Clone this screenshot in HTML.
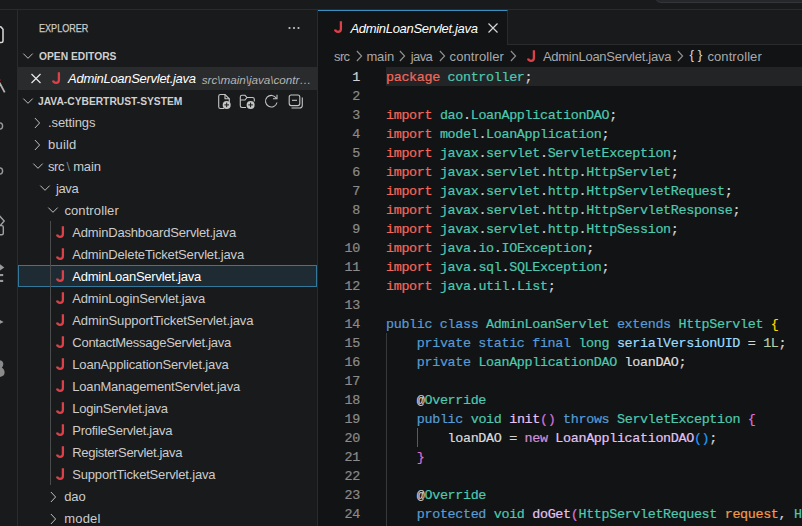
<!DOCTYPE html>
<html><head><meta charset="utf-8"><title>AdminLoanServlet.java</title>
<style>
html,body{margin:0;padding:0;width:802px;height:526px;overflow:hidden;background:#191a1b;}
body{position:relative;font-family:"Liberation Sans", sans-serif;}
.abs{position:absolute}
.t{position:absolute;white-space:pre;}
.ic{position:absolute;overflow:visible}
.j{position:absolute;font-family:"Liberation Sans", sans-serif;font-weight:bold;line-height:22px;color:#dc4048;}
#ed{position:absolute;left:318px;top:10px;width:484px;height:516px;background:#121314;}
#tabbar{position:absolute;left:318px;top:10px;width:484px;height:34px;background:#191a1b;border-bottom:1px solid #2a2b2d;}
#tab{position:absolute;left:318px;top:10px;width:190px;height:35px;background:#121314;border-right:1px solid #2a2b2d;border-top:1px solid #3a8fbf;box-sizing:border-box}
.ln{position:absolute;left:318px;width:42px;text-align:right;font:13.4px/19px "Liberation Mono", monospace;letter-spacing:-0.34px;color:#8b8b8b;height:19px;padding-top:1px;box-sizing:border-box}
.ln.act{color:#d0d0d0}
.cl{position:absolute;left:386px;white-space:pre;font:13.4px/19px "Liberation Mono", monospace;letter-spacing:-0.34px;color:#d4d4d4;height:19px;padding-top:1px;box-sizing:border-box}
.cl i{font-style:normal}
.cl,.ln{-webkit-text-stroke:0.2px currentColor}
.k{color:#569cd6}.y{color:#4ec9b0}.c{color:#f4685c}.v{color:#9cdcfe}.f{color:#e3c3f5}
.n{color:#b5cea8}.p{color:#d4d4d4}.b1{color:#ffd700}.b2{color:#da70d6}.b3{color:#179fff}
.pa{color:#f29a46}.nw{color:#d68fd6}.w{color:#dcdcdc}
</style></head><body>
<!-- title bar -->
<div class="abs" style="left:0;top:0;width:802px;height:9px;background:#191a1b;border-bottom:1px solid #2a2b2d"></div>
<div class="abs" style="left:655px;top:-10px;width:200px;height:13px;background:#26272a;border:1px solid #343538;border-radius:6px;box-sizing:border-box"></div>
<!-- activity bar -->
<div class="abs" style="left:0;top:10px;width:17px;height:516px;background:#191a1b;border-right:1px solid #2a2b2d"></div>
<svg class="abs" style="left:0;top:10px" width="17" height="516" viewBox="0 10 17 516" fill="none">
 <path d="M-1 26.4 L1 26.9 L3 29.2 V41 Q3 42.5 1.2 42.5 H-1 Z" stroke="#dadada" stroke-width="1.5" fill="#0c0c0d"/>
 <path d="M-0.5 82.8 L4.7 92.4" stroke="#b4b4b4" stroke-width="1.8"/>
 <rect x="0" y="79" width="1" height="2" fill="#6a1518"/>
 <circle cx="-0.6" cy="126" r="3.2" stroke="#9a9a9a" stroke-width="1.4"/>
 <circle cx="-0.6" cy="171" r="3.2" stroke="#9a9a9a" stroke-width="1.4"/>
 <path d="M-1 215.3 L4.2 221 L0.3 225.6 H1.8 Q3.3 225.6 3.3 227.1 V233.2 Q3.3 234.7 1.8 234.7 H-1" stroke="#a0a0a0" stroke-width="1.4"/>
 <path d="M-1 263.5 L4.3 267.4 L-1 271.3 Z" fill="#9a9a9a"/>
 <rect x="-1" y="274" width="4.2" height="2.1" fill="#9a9a9a"/>
 <rect x="-1" y="279.9" width="4.2" height="2.1" fill="#9a9a9a"/>
 <path d="M-1 319.5 L3.6 321.9 L-1 324.3 Z" fill="#9a9a9a"/>
 <path d="M-1 360 Q3.4 360.3 3.3 364.3 Q3.2 367 1.8 367.8 Q4.6 369.2 4.6 372.6 Q4.6 376.8 -1 377 Z" fill="#8a8a8a"/>
</svg>
<!-- sidebar -->
<div class="abs" style="left:18px;top:10px;width:299px;height:516px;background:#191a1b;border-right:1px solid #2a2b2d"></div>
<div class="abs" style="left:18px;top:67px;width:299px;height:22px;background:#2a2b2d"></div>
<div class="abs" style="left:18px;top:89px;width:299px;height:1px;background:#2a2b2d"></div>
<div class="abs" style="left:18px;top:265px;width:299px;height:22px;background:#1e2b33;border:1px solid #34789c;box-sizing:border-box"></div>
<div class="abs" style="left:50px;top:221px;width:1px;height:264px;background:#4a4b4d"></div>
<!-- explorer ... -->
<svg class="abs" style="left:286px;top:20px" width="16" height="16" viewBox="0 0 16 16"><circle cx="3.5" cy="8" r="1.1" fill="#c5c5c5"/><circle cx="8" cy="8" r="1.1" fill="#c5c5c5"/><circle cx="12.5" cy="8" r="1.1" fill="#c5c5c5"/></svg>
<!-- close X in open editors -->
<svg class="abs" style="left:28px;top:69.5px" width="16" height="16" viewBox="0 0 16 16"><path d="M3.5 4 L12.5 13 M12.5 4 L3.5 13" stroke="#e8e8e8" stroke-width="1.2" fill="none"/></svg>
<!-- toolbar icons -->
<svg class="abs" style="left:216px;top:93px" width="90" height="18" viewBox="216 93 90 18" fill="none" stroke="#c5c5c5" stroke-width="1.1">
 <path d="M224 108.5 H220.5 Q218.7 108.5 218.7 106.7 V96.3 Q218.7 94.5 220.5 94.5 H225 L229.3 98.8 V102"/>
 <path d="M225 94.5 V98.8 H229.3"/>
 <circle cx="226.7" cy="104.9" r="4" fill="#c5c5c5" stroke="none"/>
 <path d="M226.7 102.6 V107.2 M224.4 104.9 H229" stroke="#191a1b" stroke-width="1"/>
 <path d="M246 107.5 H242 Q240.3 107.5 240.3 105.8 V97 Q240.3 95.3 242 95.3 H245 L247 97.5 H252.5 Q254.3 97.5 254.3 99.2 V101.5"/>
 <path d="M240.3 100 H245 L247 97.5"/>
 <circle cx="250.6" cy="104.9" r="4" fill="#c5c5c5" stroke="none"/>
 <path d="M250.6 102.6 V107.2 M248.3 104.9 H252.9" stroke="#191a1b" stroke-width="1"/>
 <path d="M276.3 98.2 A5.8 5.8 0 1 0 277 102.5"/>
 <path d="M277 94.8 V98.8 H273"/>
 <rect x="289.2" y="95" width="10.6" height="10.6" rx="2"/>
 <path d="M292 100.3 H297"/>
 <path d="M291.5 108 H299.5 Q302.3 108 302.3 105.2 V97.5"/>
</svg>
<!-- editor -->
<div id="ed"></div>
<div id="tabbar"></div>
<div id="tab"></div>
<svg class="abs" style="left:485px;top:20px" width="16" height="16" viewBox="0 0 16 16"><path d="M3.5 3.5 L12.5 12.5 M12.5 3.5 L3.5 12.5" stroke="#d8d8d8" stroke-width="1.15" fill="none"/></svg>
<!-- breadcrumb { } -->
<span class="t" style="left:689.6px;top:44.3px;font:13.6px/22px 'Liberation Sans', sans-serif;color:#d4d4d4;letter-spacing:-0.05px">{&nbsp;}</span>
<!-- line highlight -->
<div class="abs" style="left:386px;top:67px;width:416px;height:19px;background:#232426"></div>
<!-- indent guides -->
<div class="abs" style="left:386px;top:333px;width:1px;height:193px;background:#38393b"></div>
<div class="abs" style="left:417px;top:428px;width:1px;height:19px;background:#5a5b5d"></div>
<div class="ln act" style="top:67px">1</div>
<div class="cl" style="top:67px"><i class="c">package</i><i class="p"> </i><i class="y">controller</i><i class="p">;</i></div>
<div class="ln" style="top:86px">2</div>
<div class="ln" style="top:105px">3</div>
<div class="cl" style="top:105px"><i class="c">import</i><i class="p"> </i><i class="y">dao</i><i class="p">.</i><i class="y">LoanApplicationDAO</i><i class="p">;</i></div>
<div class="ln" style="top:124px">4</div>
<div class="cl" style="top:124px"><i class="c">import</i><i class="p"> </i><i class="y">model</i><i class="p">.</i><i class="y">LoanApplication</i><i class="p">;</i></div>
<div class="ln" style="top:143px">5</div>
<div class="cl" style="top:143px"><i class="c">import</i><i class="p"> </i><i class="y">javax</i><i class="p">.</i><i class="y">servlet</i><i class="p">.</i><i class="y">ServletException</i><i class="p">;</i></div>
<div class="ln" style="top:162px">6</div>
<div class="cl" style="top:162px"><i class="c">import</i><i class="p"> </i><i class="y">javax</i><i class="p">.</i><i class="y">servlet</i><i class="p">.</i><i class="y">http</i><i class="p">.</i><i class="y">HttpServlet</i><i class="p">;</i></div>
<div class="ln" style="top:181px">7</div>
<div class="cl" style="top:181px"><i class="c">import</i><i class="p"> </i><i class="y">javax</i><i class="p">.</i><i class="y">servlet</i><i class="p">.</i><i class="y">http</i><i class="p">.</i><i class="y">HttpServletRequest</i><i class="p">;</i></div>
<div class="ln" style="top:200px">8</div>
<div class="cl" style="top:200px"><i class="c">import</i><i class="p"> </i><i class="y">javax</i><i class="p">.</i><i class="y">servlet</i><i class="p">.</i><i class="y">http</i><i class="p">.</i><i class="y">HttpServletResponse</i><i class="p">;</i></div>
<div class="ln" style="top:219px">9</div>
<div class="cl" style="top:219px"><i class="c">import</i><i class="p"> </i><i class="y">javax</i><i class="p">.</i><i class="y">servlet</i><i class="p">.</i><i class="y">http</i><i class="p">.</i><i class="y">HttpSession</i><i class="p">;</i></div>
<div class="ln" style="top:238px">10</div>
<div class="cl" style="top:238px"><i class="c">import</i><i class="p"> </i><i class="y">java</i><i class="p">.</i><i class="y">io</i><i class="p">.</i><i class="y">IOException</i><i class="p">;</i></div>
<div class="ln" style="top:257px">11</div>
<div class="cl" style="top:257px"><i class="c">import</i><i class="p"> </i><i class="y">java</i><i class="p">.</i><i class="y">sql</i><i class="p">.</i><i class="y">SQLException</i><i class="p">;</i></div>
<div class="ln" style="top:276px">12</div>
<div class="cl" style="top:276px"><i class="c">import</i><i class="p"> </i><i class="y">java</i><i class="p">.</i><i class="y">util</i><i class="p">.</i><i class="y">List</i><i class="p">;</i></div>
<div class="ln" style="top:295px">13</div>
<div class="ln" style="top:314px">14</div>
<div class="cl" style="top:314px"><i class="k">public class</i><i class="p"> </i><i class="y">AdminLoanServlet</i><i class="p"> </i><i class="k">extends</i><i class="p"> </i><i class="y">HttpServlet</i><i class="p"> </i><i class="b1">{</i></div>
<div class="ln" style="top:333px">15</div>
<div class="cl" style="top:333px"><i class="p">    </i><i class="k">private static final</i><i class="p"> </i><i class="y">long</i><i class="p"> </i><i class="v">serialVersionUID</i><i class="p"> = </i><i class="n">1L</i><i class="p">;</i></div>
<div class="ln" style="top:352px">16</div>
<div class="cl" style="top:352px"><i class="p">    </i><i class="k">private</i><i class="p"> </i><i class="y">LoanApplicationDAO</i><i class="p"> </i><i class="w">loanDAO</i><i class="p">;</i></div>
<div class="ln" style="top:371px">17</div>
<div class="ln" style="top:390px">18</div>
<div class="cl" style="top:390px"><i class="p">    @</i><i class="y">Override</i></div>
<div class="ln" style="top:409px">19</div>
<div class="cl" style="top:409px"><i class="p">    </i><i class="k">public</i><i class="p"> </i><i class="y">void</i><i class="p"> </i><i class="f">init</i><i class="b2">()</i><i class="p"> </i><i class="k">throws</i><i class="p"> </i><i class="y">ServletException</i><i class="p"> </i><i class="b2">{</i></div>
<div class="ln" style="top:428px">20</div>
<div class="cl" style="top:428px"><i class="p">        </i><i class="w">loanDAO</i><i class="p"> = </i><i class="nw">new</i><i class="p"> </i><i class="f">LoanApplicationDAO</i><i class="b3">()</i><i class="p">;</i></div>
<div class="ln" style="top:447px">21</div>
<div class="cl" style="top:447px"><i class="p">    </i><i class="b2">}</i></div>
<div class="ln" style="top:466px">22</div>
<div class="ln" style="top:485px">23</div>
<div class="cl" style="top:485px"><i class="p">    @</i><i class="y">Override</i></div>
<div class="ln" style="top:504px">24</div>
<div class="cl" style="top:504px"><i class="p">    </i><i class="k">protected</i><i class="p"> </i><i class="y">void</i><i class="p"> </i><i class="f">doGet</i><i class="b2">(</i><i class="y">HttpServletRequest</i><i class="p"> </i><i class="pa">request</i><i class="p">, </i><i class="y">HttpServletResponse</i></div>
<span class="t" style="left:38.6px;top:17.0px;font:normal normal 11.6px/22px 'Liberation Sans', sans-serif;transform:scaleX(0.7822);transform-origin:0 0;color:#cccccc;-webkit-text-stroke:0.25px #cccccc">EXPLORER</span>
<span class="t" style="left:38.6px;top:45.0px;font:normal bold 11.4px/22px 'Liberation Sans', sans-serif;transform:scaleX(0.9013);transform-origin:0 0;color:#d0d0d0">OPEN EDITORS</span>
<span class="t" style="left:38.1px;top:90.0px;font:normal bold 11.4px/22px 'Liberation Sans', sans-serif;transform:scaleX(0.9);transform-origin:0 0;color:#d0d0d0">JAVA-CYBERTRUST-SYSTEM</span>
<span class="t" style="left:68.1px;top:68.0px;font:italic normal 13px/22px 'Liberation Sans', sans-serif;letter-spacing:-0.291px;color:#ffffff">AdminLoanServlet.java</span>
<span class="t" style="left:201.7px;top:68.5px;font:italic normal 11.7px/22px 'Liberation Sans', sans-serif;letter-spacing:-0.018px;color:#b4b4b4">src\main\java\contr…</span>
<span class="t" style="left:48.1px;top:112.0px;font:normal normal 13px/22px 'Liberation Sans', sans-serif;letter-spacing:-0.136px;color:#cccccc">.settings</span>
<span class="t" style="left:48.1px;top:134.0px;font:normal normal 13px/22px 'Liberation Sans', sans-serif;letter-spacing:0.186px;color:#cccccc">build</span>
<span class="t" style="left:48.1px;top:156.0px;font:normal normal 13px/22px 'Liberation Sans', sans-serif;letter-spacing:-0.515px;color:#cccccc">src</span>
<span class="t" style="left:66.6px;top:156.0px;font:normal normal 13px/22px 'Liberation Sans', sans-serif;letter-spacing:0.975px;color:#7d7d7d">\</span>
<span class="t" style="left:73.2px;top:156.0px;font:normal normal 13px/22px 'Liberation Sans', sans-serif;letter-spacing:-0.147px;color:#cccccc">main</span>
<span class="t" style="left:56.1px;top:178.0px;font:normal normal 13px/22px 'Liberation Sans', sans-serif;letter-spacing:-0.44px;color:#cccccc">java</span>
<span class="t" style="left:64.4px;top:200.0px;font:normal normal 13px/22px 'Liberation Sans', sans-serif;letter-spacing:0.103px;color:#cccccc">controller</span>
<span class="t" style="left:72.3px;top:222.0px;font:normal normal 13px/22px 'Liberation Sans', sans-serif;letter-spacing:-0.18px;color:#cccccc">AdminDashboardServlet.java</span>
<span class="t" style="left:72.3px;top:244.0px;font:normal normal 13px/22px 'Liberation Sans', sans-serif;letter-spacing:-0.167px;color:#cccccc">AdminDeleteTicketServlet.java</span>
<span class="t" style="left:72.3px;top:266.0px;font:normal normal 13px/22px 'Liberation Sans', sans-serif;letter-spacing:-0.238px;color:#ffffff">AdminLoanServlet.java</span>
<span class="t" style="left:72.3px;top:288.0px;font:normal normal 13px/22px 'Liberation Sans', sans-serif;letter-spacing:-0.176px;color:#cccccc">AdminLoginServlet.java</span>
<span class="t" style="left:72.3px;top:310.0px;font:normal normal 13px/22px 'Liberation Sans', sans-serif;letter-spacing:-0.117px;color:#cccccc">AdminSupportTicketServlet.java</span>
<span class="t" style="left:72.3px;top:332.0px;font:normal normal 13px/22px 'Liberation Sans', sans-serif;letter-spacing:-0.261px;color:#cccccc">ContactMessageServlet.java</span>
<span class="t" style="left:72.3px;top:354.0px;font:normal normal 13px/22px 'Liberation Sans', sans-serif;letter-spacing:-0.153px;color:#cccccc">LoanApplicationServlet.java</span>
<span class="t" style="left:72.3px;top:376.0px;font:normal normal 13px/22px 'Liberation Sans', sans-serif;letter-spacing:-0.194px;color:#cccccc">LoanManagementServlet.java</span>
<span class="t" style="left:72.3px;top:398.0px;font:normal normal 13px/22px 'Liberation Sans', sans-serif;letter-spacing:-0.255px;color:#cccccc">LoginServlet.java</span>
<span class="t" style="left:72.3px;top:420.0px;font:normal normal 13px/22px 'Liberation Sans', sans-serif;letter-spacing:-0.257px;color:#cccccc">ProfileServlet.java</span>
<span class="t" style="left:72.3px;top:442.0px;font:normal normal 13px/22px 'Liberation Sans', sans-serif;letter-spacing:-0.326px;color:#cccccc">RegisterServlet.java</span>
<span class="t" style="left:72.3px;top:464.0px;font:normal normal 13px/22px 'Liberation Sans', sans-serif;letter-spacing:-0.186px;color:#cccccc">SupportTicketServlet.java</span>
<span class="t" style="left:64.2px;top:486.0px;font:normal normal 13px/22px 'Liberation Sans', sans-serif;letter-spacing:-0.101px;color:#cccccc">dao</span>
<span class="t" style="left:64.2px;top:508.0px;font:normal normal 13px/22px 'Liberation Sans', sans-serif;letter-spacing:0.196px;color:#cccccc">model</span>
<span class="t" style="left:350.5px;top:17.5px;font:italic normal 13px/22px 'Liberation Sans', sans-serif;letter-spacing:-0.314px;color:#ffffff">AdminLoanServlet.java</span>
<span class="t" style="left:334.1px;top:45.5px;font:normal normal 13px/22px 'Liberation Sans', sans-serif;letter-spacing:-0.715px;color:#a9a9a9">src</span>
<span class="t" style="left:366.4px;top:45.5px;font:normal normal 13px/22px 'Liberation Sans', sans-serif;letter-spacing:-0.097px;color:#a9a9a9">main</span>
<span class="t" style="left:410.7px;top:45.5px;font:normal normal 13px/22px 'Liberation Sans', sans-serif;letter-spacing:-0.59px;color:#a9a9a9">java</span>
<span class="t" style="left:449.6px;top:45.5px;font:normal normal 13px/22px 'Liberation Sans', sans-serif;letter-spacing:0.093px;color:#a9a9a9">controller</span>
<span class="t" style="left:542.9px;top:45.5px;font:normal normal 13px/22px 'Liberation Sans', sans-serif;letter-spacing:-0.257px;color:#a9a9a9">AdminLoanServlet.java</span>
<span class="t" style="left:707.4px;top:45.5px;font:normal normal 13px/22px 'Liberation Sans', sans-serif;letter-spacing:0.103px;color:#a9a9a9">controller</span>
<svg class="ic" style="left:20.2px;top:48px" width="16" height="16" viewBox="0 0 16 16"><path d="M3.3 5.6 L8 10.3 L12.7 5.6" fill="none" stroke="#c0c0c0" stroke-width="1.0"/></svg><svg class="ic" style="left:20.2px;top:93px" width="16" height="16" viewBox="0 0 16 16"><path d="M3.3 5.6 L8 10.3 L12.7 5.6" fill="none" stroke="#c0c0c0" stroke-width="1.0"/></svg><svg class="ic" style="left:28.5px;top:114.5px" width="16" height="16" viewBox="0 0 16 16"><path d="M5.9 3 L10.6 8 L5.9 13" fill="none" stroke="#c0c0c0" stroke-width="1.0"/></svg><svg class="ic" style="left:28.5px;top:136.5px" width="16" height="16" viewBox="0 0 16 16"><path d="M5.9 3 L10.6 8 L5.9 13" fill="none" stroke="#c0c0c0" stroke-width="1.0"/></svg><svg class="ic" style="left:29.6px;top:157.5px" width="16" height="16" viewBox="0 0 16 16"><path d="M3.3 5.6 L8 10.3 L12.7 5.6" fill="none" stroke="#c0c0c0" stroke-width="1.0"/></svg><svg class="ic" style="left:37.4px;top:179.5px" width="16" height="16" viewBox="0 0 16 16"><path d="M3.3 5.6 L8 10.3 L12.7 5.6" fill="none" stroke="#c0c0c0" stroke-width="1.0"/></svg><svg class="ic" style="left:44.9px;top:201.5px" width="16" height="16" viewBox="0 0 16 16"><path d="M3.3 5.6 L8 10.3 L12.7 5.6" fill="none" stroke="#c0c0c0" stroke-width="1.0"/></svg><svg class="ic" style="left:44.7px;top:488.5px" width="16" height="16" viewBox="0 0 16 16"><path d="M5.9 3 L10.6 8 L5.9 13" fill="none" stroke="#c0c0c0" stroke-width="1.0"/></svg><svg class="ic" style="left:44.7px;top:510.5px" width="16" height="16" viewBox="0 0 16 16"><path d="M5.9 3 L10.6 8 L5.9 13" fill="none" stroke="#c0c0c0" stroke-width="1.0"/></svg><svg class="ic" style="left:56.2px;top:226.1px" width="9" height="12" viewBox="0 0 9 12"><path d="M6.9 0.2 V7.9 C6.9 10.2 5.6 10.8 4.0 10.8 C2.4 10.8 1.4 10.0 1.0 8.5" fill="none" stroke="#dc4048" stroke-width="2.3"/></svg><svg class="ic" style="left:56.2px;top:248.1px" width="9" height="12" viewBox="0 0 9 12"><path d="M6.9 0.2 V7.9 C6.9 10.2 5.6 10.8 4.0 10.8 C2.4 10.8 1.4 10.0 1.0 8.5" fill="none" stroke="#dc4048" stroke-width="2.3"/></svg><svg class="ic" style="left:56.2px;top:270.1px" width="9" height="12" viewBox="0 0 9 12"><path d="M6.9 0.2 V7.9 C6.9 10.2 5.6 10.8 4.0 10.8 C2.4 10.8 1.4 10.0 1.0 8.5" fill="none" stroke="#dc4048" stroke-width="2.3"/></svg><svg class="ic" style="left:56.2px;top:292.1px" width="9" height="12" viewBox="0 0 9 12"><path d="M6.9 0.2 V7.9 C6.9 10.2 5.6 10.8 4.0 10.8 C2.4 10.8 1.4 10.0 1.0 8.5" fill="none" stroke="#dc4048" stroke-width="2.3"/></svg><svg class="ic" style="left:56.2px;top:314.1px" width="9" height="12" viewBox="0 0 9 12"><path d="M6.9 0.2 V7.9 C6.9 10.2 5.6 10.8 4.0 10.8 C2.4 10.8 1.4 10.0 1.0 8.5" fill="none" stroke="#dc4048" stroke-width="2.3"/></svg><svg class="ic" style="left:56.2px;top:336.1px" width="9" height="12" viewBox="0 0 9 12"><path d="M6.9 0.2 V7.9 C6.9 10.2 5.6 10.8 4.0 10.8 C2.4 10.8 1.4 10.0 1.0 8.5" fill="none" stroke="#dc4048" stroke-width="2.3"/></svg><svg class="ic" style="left:56.2px;top:358.1px" width="9" height="12" viewBox="0 0 9 12"><path d="M6.9 0.2 V7.9 C6.9 10.2 5.6 10.8 4.0 10.8 C2.4 10.8 1.4 10.0 1.0 8.5" fill="none" stroke="#dc4048" stroke-width="2.3"/></svg><svg class="ic" style="left:56.2px;top:380.1px" width="9" height="12" viewBox="0 0 9 12"><path d="M6.9 0.2 V7.9 C6.9 10.2 5.6 10.8 4.0 10.8 C2.4 10.8 1.4 10.0 1.0 8.5" fill="none" stroke="#dc4048" stroke-width="2.3"/></svg><svg class="ic" style="left:56.2px;top:402.1px" width="9" height="12" viewBox="0 0 9 12"><path d="M6.9 0.2 V7.9 C6.9 10.2 5.6 10.8 4.0 10.8 C2.4 10.8 1.4 10.0 1.0 8.5" fill="none" stroke="#dc4048" stroke-width="2.3"/></svg><svg class="ic" style="left:56.2px;top:424.1px" width="9" height="12" viewBox="0 0 9 12"><path d="M6.9 0.2 V7.9 C6.9 10.2 5.6 10.8 4.0 10.8 C2.4 10.8 1.4 10.0 1.0 8.5" fill="none" stroke="#dc4048" stroke-width="2.3"/></svg><svg class="ic" style="left:56.2px;top:446.1px" width="9" height="12" viewBox="0 0 9 12"><path d="M6.9 0.2 V7.9 C6.9 10.2 5.6 10.8 4.0 10.8 C2.4 10.8 1.4 10.0 1.0 8.5" fill="none" stroke="#dc4048" stroke-width="2.3"/></svg><svg class="ic" style="left:56.2px;top:468.1px" width="9" height="12" viewBox="0 0 9 12"><path d="M6.9 0.2 V7.9 C6.9 10.2 5.6 10.8 4.0 10.8 C2.4 10.8 1.4 10.0 1.0 8.5" fill="none" stroke="#dc4048" stroke-width="2.3"/></svg><svg class="ic" style="left:52.4px;top:72.1px" width="9" height="12" viewBox="0 0 9 12"><path d="M6.9 0.2 V7.9 C6.9 10.2 5.6 10.8 4.0 10.8 C2.4 10.8 1.4 10.0 1.0 8.5" fill="none" stroke="#dc4048" stroke-width="2.3"/></svg><svg class="ic" style="left:334.2px;top:21px" width="9" height="12" viewBox="0 0 9 12"><path d="M6.9 0.2 V7.9 C6.9 10.2 5.6 10.8 4.0 10.8 C2.4 10.8 1.4 10.0 1.0 8.5" fill="none" stroke="#dc4048" stroke-width="2.3"/></svg><svg class="ic" style="left:526.9px;top:50.2px" width="9" height="12" viewBox="0 0 9 12"><path d="M6.9 0.2 V7.9 C6.9 10.2 5.6 10.8 4.0 10.8 C2.4 10.8 1.4 10.0 1.0 8.5" fill="none" stroke="#dc4048" stroke-width="2.3"/></svg><svg class="ic" style="left:350.85px;top:48.0px" width="16" height="16" viewBox="0 0 16 16"><path d="M5.9 3 L10.6 8 L5.9 13" fill="none" stroke="#909090" stroke-width="1.15"/></svg><svg class="ic" style="left:394.35px;top:48.0px" width="16" height="16" viewBox="0 0 16 16"><path d="M5.9 3 L10.6 8 L5.9 13" fill="none" stroke="#909090" stroke-width="1.15"/></svg><svg class="ic" style="left:433.55px;top:48.0px" width="16" height="16" viewBox="0 0 16 16"><path d="M5.9 3 L10.6 8 L5.9 13" fill="none" stroke="#909090" stroke-width="1.15"/></svg><svg class="ic" style="left:504.95000000000005px;top:48.0px" width="16" height="16" viewBox="0 0 16 16"><path d="M5.9 3 L10.6 8 L5.9 13" fill="none" stroke="#909090" stroke-width="1.15"/></svg><svg class="ic" style="left:672.05px;top:48.0px" width="16" height="16" viewBox="0 0 16 16"><path d="M5.9 3 L10.6 8 L5.9 13" fill="none" stroke="#909090" stroke-width="1.15"/></svg>
</body></html>
